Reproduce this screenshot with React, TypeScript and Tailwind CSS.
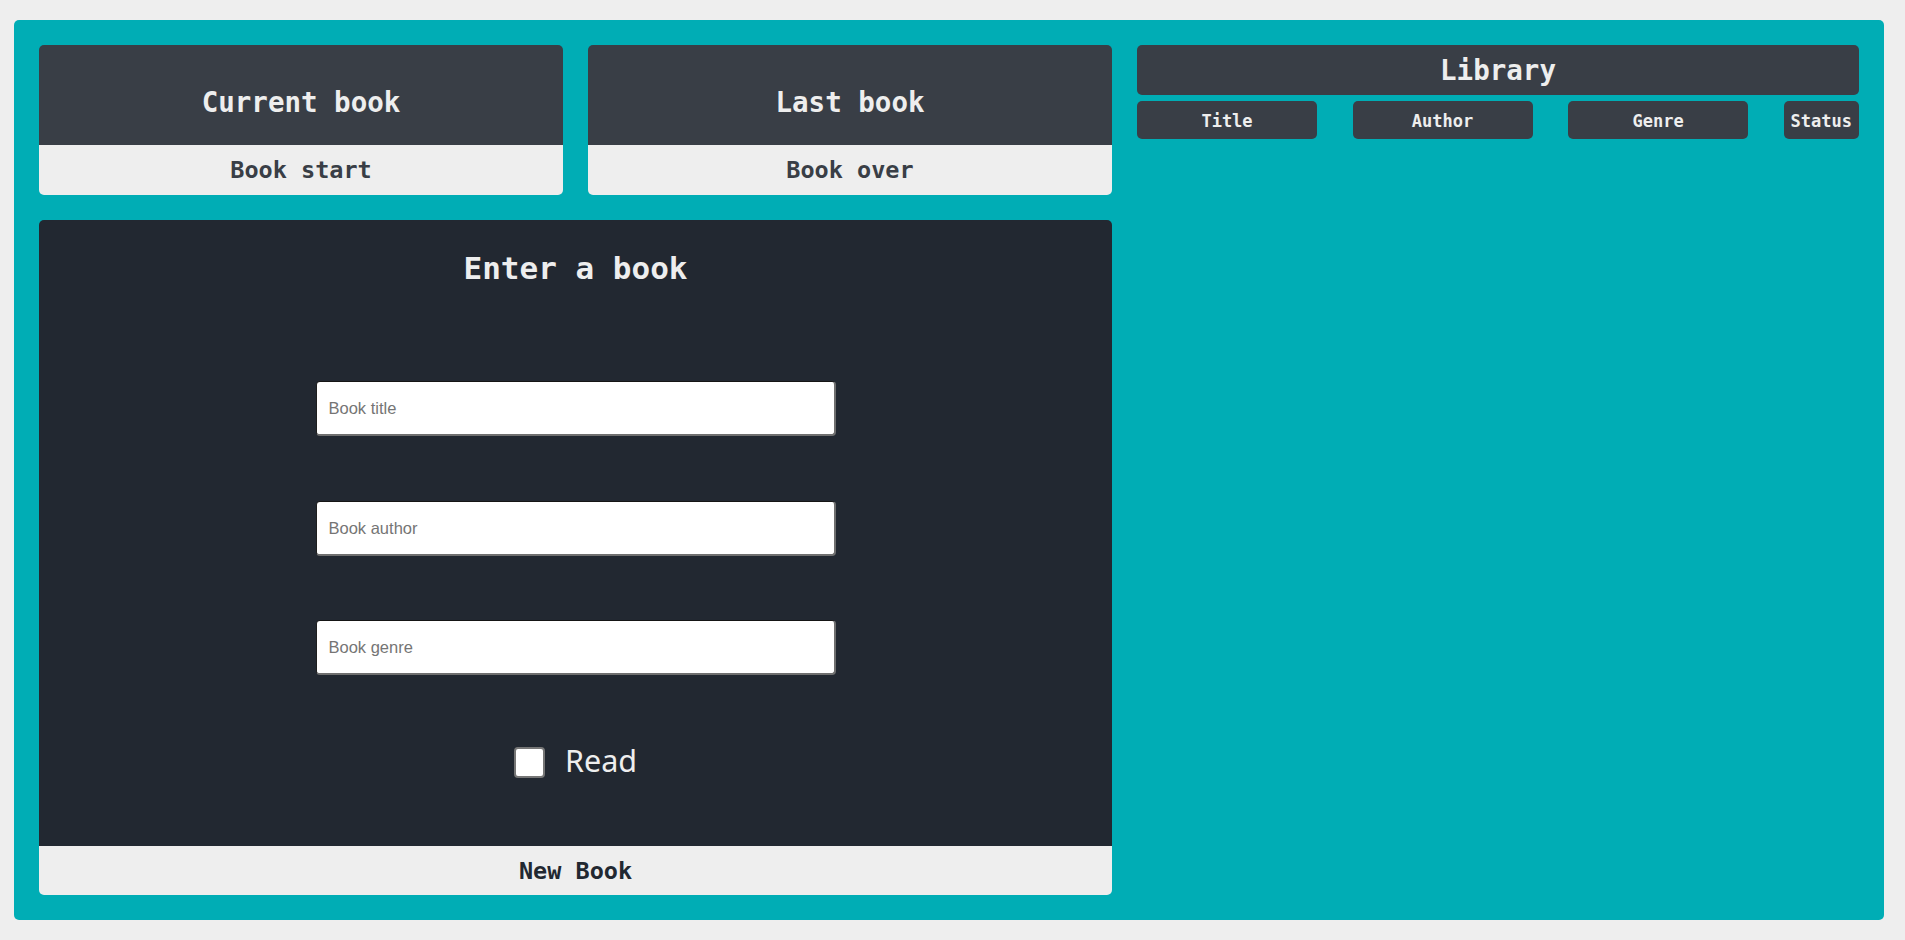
import React from "react";

const mono = "font-['DejaVu_Sans_Mono',monospace]";

function TopCard({ title, action }: { title: string; action: string }) {
  return (
    <div className="flex flex-col rounded-[5px] overflow-hidden h-[150px]">
      <div className="h-[100px] bg-[#393e46] flex items-center justify-center pt-[13px]">
        <h2 className={`${mono} font-bold text-[27.5px] leading-[32px] text-[#eeeeee]`}>{title}</h2>
      </div>
      <button className={`${mono} h-[50px] bg-[#eeeeee] font-bold text-[23.5px] leading-[28px] text-[#393e46] flex items-center justify-center`}>
        {action}
      </button>
    </div>
  );
}

function Field({ placeholder, className }: { placeholder: string; className: string }) {
  return (
    <input
      type="text"
      placeholder={placeholder}
      className={`${className} w-[520px] h-[55px] bg-white rounded-[4px] border-t border-l border-b-2 border-r-2 border-t-[#151515] border-l-[#1e1e1e] border-b-[#6f6f6f] border-r-[#6f6f6f] pl-[12px] font-['Liberation_Sans',Arial,sans-serif] text-[16.5px] text-black placeholder:text-[#757575] outline-none`}
    />
  );
}

export default function App() {
  return (
    <div className="min-h-[940px] w-full bg-[#eeeeee] pt-[20px] pl-[14px]">
      <div className="w-[1870px] h-[900px] bg-[#00adb5] rounded-[5px] p-[25px] grid grid-cols-[524px_524px_1fr] grid-rows-[150px_675px] gap-x-[25px] gap-y-[25px]">
        <TopCard title="Current book" action="Book start" />
        <TopCard title="Last book" action="Book over" />

        <div className="row-span-2 flex flex-col">
          <div className="h-[50px] bg-[#393e46] rounded-[5px] flex items-center justify-center">
            <h2 className={`${mono} font-bold text-[27.5px] leading-[32px] text-[#eeeeee]`}>Library</h2>
          </div>
          <div className="mt-[6px] flex justify-between">
            {["Title", "Author", "Genre"].map((t) => (
              <div
                key={t}
                className={`${mono} w-[180px] h-[38px] pt-[3px] bg-[#393e46] rounded-[5px] flex items-center justify-center font-bold text-[17px] text-[#eeeeee]`}
              >
                {t}
              </div>
            ))}
            <div
              className={`${mono} h-[38px] pt-[3px] px-[7px] bg-[#393e46] rounded-[5px] flex items-center justify-center font-bold text-[17px] text-[#eeeeee]`}
            >
              Status
            </div>
          </div>
        </div>

        <div className="col-span-2 flex flex-col rounded-[5px] overflow-hidden">
          <div className="h-[626px] bg-[#222831] flex flex-col items-center pt-[30px]">
            <h2 className={`${mono} font-bold text-[31px] leading-[36px] text-[#eeeeee]`}>Enter a book</h2>
            <Field placeholder="Book title" className="mt-[95px]" />
            <Field placeholder="Book author" className="mt-[65px]" />
            <Field placeholder="Book genre" className="mt-[64px]" />
            <label className="mt-[72px] flex items-center gap-[20px]">
              <input
                type="checkbox"
                className="appearance-none w-[31px] h-[31px] bg-white border-2 border-[#767676] rounded-[4px]"
              />
              <span className="font-['Noto_Sans',sans-serif] text-[30.5px] leading-[31px] -mt-[5px] text-[#eeeeee]">Read</span>
            </label>
          </div>
          <button className={`${mono} h-[49px] bg-[#eeeeee] font-bold text-[23.5px] leading-[28px] text-[#222831] flex items-center justify-center`}>
            New Book
          </button>
        </div>
      </div>
    </div>
  );
}
